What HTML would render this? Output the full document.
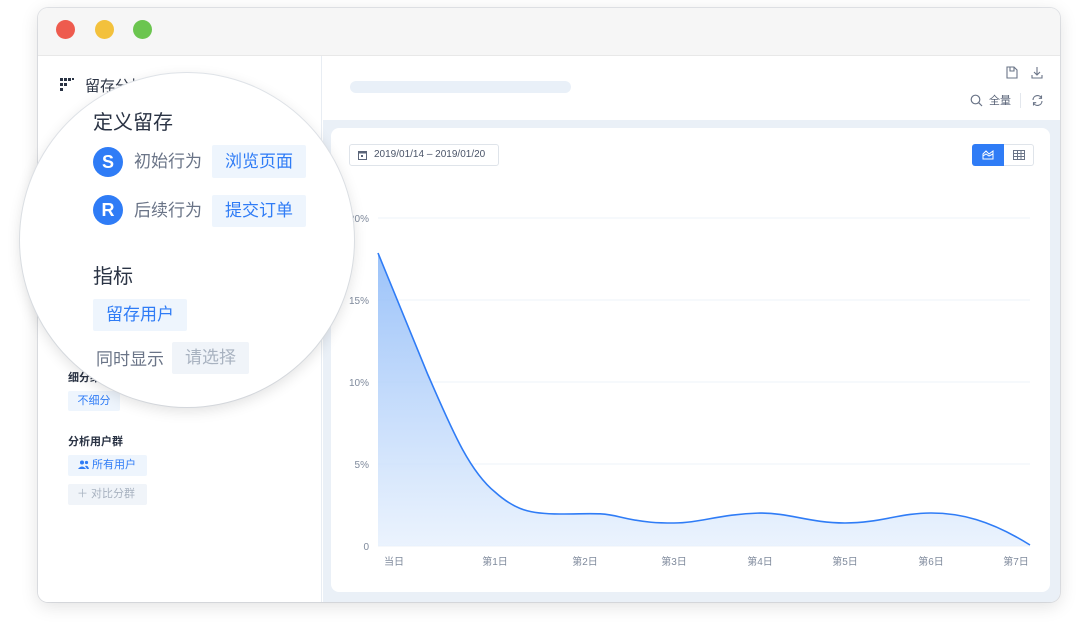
<!DOCTYPE html>
<html><head><meta charset="utf-8"><style>
*{margin:0;padding:0;box-sizing:border-box}
body{width:1080px;height:634px;background:#fff;position:relative;overflow:hidden;font-family:"Liberation Sans","Noto Sans CJK SC",sans-serif}
.win{position:absolute;left:38px;top:8px;width:1022px;height:594px;border-radius:10px;background:#fff;box-shadow:0 4px 18px rgba(0,0,0,.12),0 0 0 1px #e6e8ec;overflow:hidden}
.tb{position:absolute;left:0;top:0;width:100%;height:48px;background:#f6f6f6;border-bottom:1px solid #e8e8e8}
.dot{position:absolute;top:12px;width:19px;height:19px;border-radius:50%}
.side{position:absolute;left:0;top:48px;width:284px;height:546px;background:#fff;border-right:1px solid #e8edf3}
.main{position:absolute;left:285px;top:48px;right:0;bottom:0;background:#eaf0f7}
.hdr{position:absolute;left:0;top:0;right:0;height:64px;background:#fff}
.card{position:absolute;left:8px;top:72px;width:719px;height:464px;background:#fff;border-radius:8px}
.abs{position:absolute}
.tag{position:absolute;background:#eef5fd;color:#2f7cf6;border-radius:2px}
.circ{position:absolute;left:20px;top:73px;width:334px;height:334px;border-radius:50%;background:#fff;box-shadow:0 4px 14px rgba(0,0,0,.12),0 0 0 1px #e6eaef}
</style></head><body>
<div class="win">
 <div class="tb">
  <div class="dot" style="left:18px;background:#ee5b4e"></div>
  <div class="dot" style="left:57px;background:#f3c13c"></div>
  <div class="dot" style="left:95px;background:#6bc54f"></div>
 </div>
 <div class="side">
  <svg class="abs" style="left:22px;top:22px" width="14" height="14"><g fill="#2a3344"><rect x="0" y="0" width="3" height="3"/><rect x="4" y="0" width="3" height="3"/><rect x="8" y="0" width="3" height="3"/><rect x="12" y="0" width="2" height="2"/><rect x="0" y="5" width="3" height="3"/><rect x="4" y="5" width="3" height="3"/><rect x="0" y="10" width="3" height="3"/></g></svg>
  <div class="abs" style="left:47px;top:19px;font-size:15px;color:#2a3344">留存分析</div>
  <div class="abs" style="left:30px;top:313px;font-size:11px;font-weight:bold;color:#2a3344">细分维度</div>
  <div class="tag" style="left:30px;top:335px;width:52px;height:20px;font-size:11px;line-height:20px;text-align:center">不细分</div>
  <div class="abs" style="left:30px;top:377px;font-size:11px;font-weight:bold;color:#2a3344">分析用户群</div>
  <div class="tag" style="left:30px;top:399px;width:79px;height:21px;font-size:11px;line-height:21px;padding-left:10px">
   <svg width="11" height="9" style="vertical-align:-1px"><circle cx="4" cy="2.5" r="2" fill="#2f7cf6"/><path d="M0 9 Q4 4 8 9Z" fill="#2f7cf6"/><circle cx="8.5" cy="2.5" r="1.6" fill="#2f7cf6"/><path d="M7 6 Q10 5 11 9 H9Z" fill="#2f7cf6"/></svg> 所有用户</div>
  <div class="tag" style="left:30px;top:428px;width:79px;height:21px;font-size:11px;line-height:21px;padding-left:9px;color:#a8b2c0;background:#f0f4f9">＋ 对比分群</div>
 </div>
 <div class="main">
  <div class="hdr">
   <div class="abs" style="left:27px;top:25px;width:221px;height:12px;border-radius:6px;background:#e9f0f8"></div>
   <svg class="abs" style="left:683px;top:10px" width="12" height="13"><path d="M1 1H8L11 4V12H1Z M4 1V5H8V1" fill="none" stroke="#6a7487" stroke-width="1.1"/></svg>
   <svg class="abs" style="left:708px;top:10px" width="12" height="13"><path d="M6 1V9M3 6L6 9L9 6M1 9V12H11V9" fill="none" stroke="#6a7487" stroke-width="1.1"/></svg>
   <svg class="abs" style="left:647px;top:38px" width="13" height="13"><circle cx="5.5" cy="5.5" r="4.3" fill="none" stroke="#6a7487" stroke-width="1.2"/><path d="M8.7 8.7L12 12" stroke="#6a7487" stroke-width="1.2"/></svg>
   <div class="abs" style="left:666px;top:36px;font-size:11px;color:#5a6478">全量</div>
   <div class="abs" style="left:697px;top:37px;width:1px;height:15px;background:#e3e7ed"></div>
   <svg class="abs" style="left:708px;top:38px" width="13" height="13"><path d="M2 6A4.5 4.5 0 0 1 10.5 4M11 7A4.5 4.5 0 0 1 2.5 9" fill="none" stroke="#6a7487" stroke-width="1.1"/><path d="M10.5 1.5V4.3H7.8M2.5 11.5V8.7H5.2" fill="none" stroke="#6a7487" stroke-width="1.1"/></svg>
  </div>
  <div class="card">
   <div class="abs" style="left:18px;top:16px;width:150px;height:22px;border:1px solid #dfe4ea;border-radius:3px;font-size:10px;color:#4a5468;line-height:20px;padding-left:24px">2019/01/14 – 2019/01/20</div>
   <svg class="abs" style="left:27px;top:22px" width="9" height="10"><rect x="0.5" y="1.5" width="8" height="8" fill="none" stroke="#5a6478"/><rect x="0.5" y="1.5" width="8" height="2" fill="#5a6478"/><rect x="3" y="5" width="2" height="2" fill="#5a6478"/></svg>
   <div class="abs" style="left:641px;top:16px;width:32px;height:22px;background:#2f7cf6;border-radius:3px 0 0 3px"></div>
   <svg class="abs" style="left:651px;top:22px" width="12" height="10"><path d="M1 9V4L4 1L7 4L11 1V9Z M1 6L4 4L7 6L11 4" fill="none" stroke="#fff" stroke-width="1"/></svg>
   <div class="abs" style="left:673px;top:16px;width:30px;height:22px;border:1px solid #dfe4ea;border-left:none;border-radius:0 3px 3px 0"></div>
   <svg class="abs" style="left:682px;top:22px" width="12" height="10"><rect x="0.5" y="0.5" width="11" height="9" fill="none" stroke="#6a7487"/><path d="M0.5 3.5H11.5M0.5 6.5H11.5M4.5 0.5V9.5M8 0.5V9.5" stroke="#6a7487"/></svg>
  </div>
 </div>
</div>
<svg class="abs" style="left:0;top:0" width="1080" height="634">
 <defs><linearGradient id="g" x1="0" y1="0" x2="0" y2="1"><stop offset="0" stop-color="#8ab8f8" stop-opacity=".85"/><stop offset="1" stop-color="#e6f0fd" stop-opacity=".8"/></linearGradient></defs>
 <g stroke="#eef3f9" stroke-width="1"><path d="M378 218H1030M378 300H1030M378 382H1030M378 464H1030"/></g>
 <path d="M378 546H1030" stroke="#eef2f7"/>
 <path d="M378 253 L428 375 C450 425 468 470 495 492 C515 510 530 514 560 514 C590 514 600 512 620 517 C645 523 660 523 674 523 C700 523 720 514 760 513 C790 513 810 523 845 523 C880 523 900 513 931 513 C960 513 990 520 1030 545 L1030 546 L378 546Z" fill="url(#g)"/>
 <path d="M378 253 L428 375 C450 425 468 470 495 492 C515 510 530 514 560 514 C590 514 600 512 620 517 C645 523 660 523 674 523 C700 523 720 514 760 513 C790 513 810 523 845 523 C880 523 900 513 931 513 C960 513 990 520 1030 545" fill="none" stroke="#2f7cf6" stroke-width="1.6"/>
 <g font-family="Liberation Sans,Noto Sans CJK SC,sans-serif" font-size="10" fill="#7f8a9c" text-anchor="end">
  <text x="369" y="222">20%</text><text x="369" y="304">15%</text><text x="369" y="386">10%</text><text x="369" y="468">5%</text><text x="369" y="550">0</text>
 </g>
 <g font-family="Liberation Sans,Noto Sans CJK SC,sans-serif" font-size="10" fill="#7f8a9c" text-anchor="middle">
  <text x="394" y="565">当日</text><text x="495" y="565">第1日</text><text x="585" y="565">第2日</text><text x="674" y="565">第3日</text><text x="760" y="565">第4日</text><text x="845" y="565">第5日</text><text x="931" y="565">第6日</text><text x="1016" y="565">第7日</text>
 </g>
</svg>
<div class="circ"></div>
<div class="abs" style="left:93px;top:106px;font-size:20px;color:#2a3344">定义留存</div>
<div class="abs" style="left:93px;top:147px;width:30px;height:30px;border-radius:50%;background:#2f7cf6;color:#fff;font-size:18px;font-weight:bold;text-align:center;line-height:30px">S</div>
<div class="abs" style="left:134px;top:147px;font-size:17px;color:#6a7487">初始行为</div>
<div class="tag" style="left:212px;top:145px;width:94px;height:33px;font-size:17px;line-height:33px;text-align:center">浏览页面</div>
<div class="abs" style="left:93px;top:195px;width:30px;height:30px;border-radius:50%;background:#2f7cf6;color:#fff;font-size:18px;font-weight:bold;text-align:center;line-height:30px">R</div>
<div class="abs" style="left:134px;top:196px;font-size:17px;color:#6a7487">后续行为</div>
<div class="tag" style="left:212px;top:195px;width:94px;height:32px;font-size:17px;line-height:32px;text-align:center">提交订单</div>
<div class="abs" style="left:93px;top:260px;font-size:20px;color:#2a3344">指标</div>
<div class="tag" style="left:93px;top:299px;width:94px;height:32px;font-size:17px;line-height:32px;text-align:center">留存用户</div>
<div class="abs" style="left:96px;top:345px;font-size:17px;color:#6a7487">同时显示</div>
<div class="tag" style="left:172px;top:342px;width:77px;height:32px;font-size:17px;line-height:32px;text-align:center;color:#a8b2c0;background:#f0f4f9">请选择</div>
</body></html>
